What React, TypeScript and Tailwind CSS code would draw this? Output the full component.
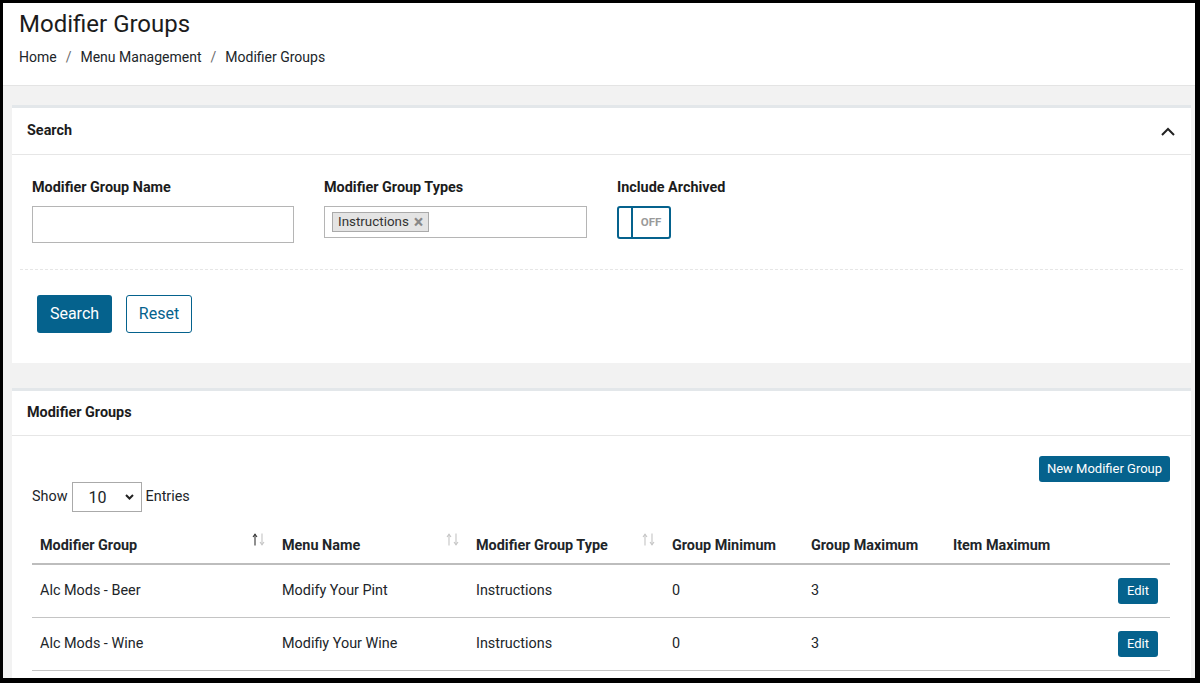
import React from "react";

function SortIcon({ active }: { active?: boolean }) {
  const up = active ? "#333" : "#c4c4c4";
  const down = "#c4c4c4";
  return (
    <svg width="13" height="13" viewBox="0 0 13 13" className="mt-[-3px] shrink-0">
      <path d="M3 1.5 V12.5" stroke={up} strokeWidth="1.1" fill="none" />
      <path d="M1 4 L3 1.2 L5 4" stroke={up} strokeWidth="1.1" fill="none" />
      <path d="M10 0.5 V11.5" stroke={down} strokeWidth="1.1" fill="none" />
      <path d="M8 9 L10 11.8 L12 9" stroke={down} strokeWidth="1.1" fill="none" />
    </svg>
  );
}

const rows = [
  { g: "Alc Mods - Beer", m: "Modify Your Pint", t: "Instructions", min: "0", max: "3", item: "" },
  { g: "Alc Mods - Wine", m: "Modifiy Your Wine", t: "Instructions", min: "0", max: "3", item: "" },
];

export default function App() {
  return (
    <div
      className="h-[683px] w-[1200px] overflow-hidden border-l-[3px] border-t-[3px] border-r-[5px] border-b-[5px] border-black bg-[#f2f2f2] text-[#212529]"
      style={{ fontFamily: "Roboto, 'Noto Sans', sans-serif" }}
    >
      {/* Page header */}
      <div className="bg-white border-b border-[#e4e4e4] pl-[16px] pt-[6px] pb-[18px]">
        <h1 className="text-[24px] leading-[30px] font-normal text-[#1c1c1c]">Modifier Groups</h1>
        <div className="mt-[8px] flex items-center text-[14px] leading-[20px] text-[#212529]">
          <span>Home</span>
          <span className="px-[9px] text-[#6c6c6c]">/</span>
          <span>Menu Management</span>
          <span className="px-[9px] text-[#6c6c6c]">/</span>
          <span>Modifier Groups</span>
        </div>
      </div>

      <div className="pl-[9px] pr-[4px] pt-[19px]">
        {/* Search card */}
        <div className="bg-white border-t-[3px] border-[#e3e7ea]">
          <div className="flex items-center justify-between border-b border-[#e6e6e6] px-[15px] py-[13px] text-[14.4px] leading-[20px]">
            <span className="font-bold text-[#1c1c1c]">Search</span>
            <svg width="14" height="9" viewBox="0 0 14 9" className="mr-[1px]">
              <path d="M1 8 L7 2 L13 8" stroke="#222" strokeWidth="2" fill="none" />
            </svg>
          </div>
          <div className="px-[8px]">
            <div className="grid grid-cols-[262px_263px_auto] gap-x-[30px] px-[12px] pt-[23px] pb-[26px]">
              <div>
                <div className="text-[14.4px] leading-[20px] font-bold text-[#1c1c1c]">Modifier Group Name</div>
                <div className="mt-[8px] h-[37px] border border-[#b5b5b5] bg-white"></div>
              </div>
              <div>
                <div className="text-[14.4px] leading-[20px] font-bold text-[#1c1c1c]">Modifier Group Types</div>
                <div className="mt-[8px] flex h-[32px] items-center border border-[#b5b5b5] bg-white px-[7px]">
                  <span className="flex h-[20px] items-center gap-[5px] border border-[#aaa] bg-[#e4e4e4] px-[5px] text-[13.4px] leading-none text-[#333]">
                    Instructions
                    <span className="text-[18px] font-bold leading-none text-[#888] mt-[-1px]">×</span>
                  </span>
                </div>
              </div>
              <div>
                <div className="text-[14.4px] leading-[20px] font-bold text-[#1c1c1c]">Include Archived</div>
                <div className="mt-[8px] flex h-[33px] w-[54px] rounded-[3px] border-2 border-[#05628d]">
                  <div className="w-[14px] border-r-2 border-[#05628d]"></div>
                  <div className="flex flex-1 items-center justify-center text-[11.5px] font-bold text-[#9a9a9a]">OFF</div>
                </div>
              </div>
            </div>
            <div className="border-t border-dashed border-[#e6e6e6]"></div>
            <div className="flex gap-[14px] pl-[17px] pt-[25px] pb-[30px]">
              <button className="h-[38px] w-[75px] rounded-[3px] bg-[#05628d] text-[16px] text-white">Search</button>
              <button className="h-[38px] w-[66px] rounded-[3px] border border-[#05628d] bg-white text-[16px] text-[#05628d]">Reset</button>
            </div>
          </div>
        </div>

        {/* Modifier Groups card */}
        <div className="mt-[25px] bg-white border-t-[3px] border-[#e3e7ea]">
          <div className="border-b border-[#e6e6e6] px-[15px] py-[12px] text-[14.4px] leading-[20px]">
            <span className="font-bold text-[#1c1c1c]">Modifier Groups</span>
          </div>
          <div className="pl-[20px] pr-[21px] pt-[20px]">
            <div className="flex justify-end">
              <button className="h-[26px] w-[131px] rounded-[3px] bg-[#05628d] text-[13px] text-white">New Modifier Group</button>
            </div>
            <div className="flex items-center text-[14.4px] leading-[20px]">
              <span className="mt-[-1px]">Show</span>
              <div className="mx-[4px] flex h-[30px] w-[70px] items-center justify-between border border-[#aaa] pl-[16px] pr-[7px]">
                <span className="text-[16px] mt-[2px]">10</span>
                <svg width="9" height="6" viewBox="0 0 9 6">
                  <path d="M1 1 L4.5 4.5 L8 1" stroke="#222" strokeWidth="2" fill="none" />
                </svg>
              </div>
              <span className="mt-[-1px]">Entries</span>
            </div>
            <table className="mt-[16px] w-[1138px] table-fixed border-collapse text-[14.4px]">
              <colgroup>
                <col className="w-[242px]" />
                <col className="w-[194px]" />
                <col className="w-[196px]" />
                <col className="w-[139px]" />
                <col className="w-[142px]" />
                <col className="w-[150px]" />
                <col />
              </colgroup>
              <thead>
                <tr className="border-b-2 border-[#bdbdbd]">
                  <th className="pl-[8px] pr-[9px] pt-[8px] pb-[7px] text-left font-bold leading-[20px]">
                    <div className="flex items-start justify-between"><span>Modifier Group</span><SortIcon active /></div>
                  </th>
                  <th className="pl-[8px] pr-[9px] pt-[8px] pb-[7px] text-left font-bold leading-[20px]">
                    <div className="flex items-start justify-between"><span>Menu Name</span><SortIcon /></div>
                  </th>
                  <th className="pl-[8px] pr-[9px] pt-[8px] pb-[7px] text-left font-bold leading-[20px]">
                    <div className="flex items-start justify-between"><span>Modifier Group Type</span><SortIcon /></div>
                  </th>
                  <th className="pl-[8px] pt-[8px] pb-[7px] text-left font-bold leading-[20px]">Group Minimum</th>
                  <th className="pl-[8px] pt-[8px] pb-[7px] text-left font-bold leading-[20px]">Group Maximum</th>
                  <th className="pl-[8px] pt-[8px] pb-[7px] text-left font-bold leading-[20px]">Item Maximum</th>
                  <th></th>
                </tr>
              </thead>
              <tbody>
                {rows.map((r) => (
                  <tr key={r.g} className="border-b border-[#c4c4c4]">
                    <td className="pl-[8px] py-[13px] leading-[20px] align-middle">{r.g}</td>
                    <td className="pl-[8px] py-[13px] leading-[20px] align-middle">{r.m}</td>
                    <td className="pl-[8px] py-[13px] leading-[20px] align-middle">{r.t}</td>
                    <td className="pl-[8px] py-[13px] leading-[20px] align-middle">{r.min}</td>
                    <td className="pl-[8px] py-[13px] leading-[20px] align-middle">{r.max}</td>
                    <td className="pl-[8px] py-[13px] leading-[20px] align-middle">{r.item}</td>
                    <td className="py-[13px] pr-[12px] text-right align-middle">
                      <button className="h-[26px] w-[40px] rounded-[3px] bg-[#05628d] text-[13px] text-white">Edit</button>
                    </td>
                  </tr>
                ))}
                <tr>
                  <td colSpan={7} className="h-[20px]"></td>
                </tr>
              </tbody>
            </table>
          </div>
        </div>
      </div>
    </div>
  );
}
